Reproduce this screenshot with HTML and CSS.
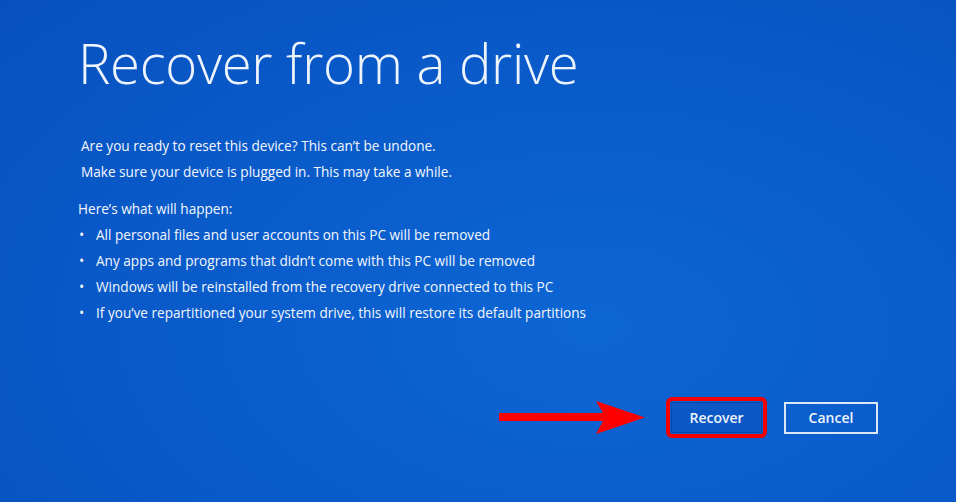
FILE: index.html
```html
<!DOCTYPE html>
<html lang="en">
<head>
    <meta charset="UTF-8">
    <meta name="viewport" content="width=device-width, initial-scale=1.0">
    <title>Recover from a drive</title>
    <link rel="stylesheet" href="styles.css">
</head>
<body>
    <div class="page">
        <h1>Recover from a drive</h1>

        <div class="intro">
            <p>Are you ready to reset this device? This can’t be undone.</p>
            <p>Make sure your device is plugged in. This may take a while.</p>
        </div>

        <div class="happen">
            <p>Here’s what will happen:</p>
            <ul>
                <li>All personal files and user accounts on this PC will be removed</li>
                <li>Any apps and programs that didn’t come with this PC will be removed</li>
                <li>Windows will be reinstalled from the recovery drive connected to this PC</li>
                <li>If you’ve repartitioned your system drive, this will restore its default partitions</li>
            </ul>
        </div>

        <div class="actions">
            <!-- стрелка-подсказка -->
            <svg class="arrow" width="146" height="33" viewBox="0 0 146 33">
                <polygon points="0,12 104,12 97,0 146,16.5 97,33 104,20 0,20" fill="#ff0000"/>
            </svg>
            <div class="highlight">
                <button class="btn btn-primary">Recover</button>
            </div>
            <button class="btn btn-cancel">Cancel</button>
        </div>
    </div>
</body>
</html>
```

FILE: styles.css
```css
/* Основные стили */
html, body {
    margin: 0;
    padding: 0;
    height: 100%;
}
body {
    background: radial-gradient(ellipse 85% 95% at 62% 65%, #0c66d4 0%, #0a5bca 50%, #0850bf 100%);
    color: #f3f7fd;
    font-family: "Open Sans", "Segoe UI", sans-serif;
    overflow: hidden;
}
.page {
    padding: 30px 78px 0 78px;
}
h1 {
    margin: 0;
    font-size: 54.5px;
    font-weight: 300;
    line-height: 66px;
    color: #eef4fc;
    letter-spacing: -0.3px;
}
.intro {
    margin-top: 37px;
    padding-left: 3px;
}
p {
    margin: 0;
    font-size: 13.6px;
    line-height: 26px;
}
.happen {
    margin-top: 11px;
}
ul {
    list-style: none;
    margin: 0;
    padding: 0;
}
li {
    position: relative;
    padding-left: 18px;
    font-size: 13.6px;
    line-height: 26px;
}
li::before {
    content: "•";
    position: absolute;
    left: 1px;
    top: 0;
    font-size: 14px;
}
.actions {
    display: flex;
    justify-content: flex-end;
    align-items: center;
    margin-top: 71px;
}
.arrow {
    display: block;
    margin-right: 21px;
}
.highlight {
    border: 4px solid #f70000;
    border-radius: 6px;
    padding: 1px;
    margin-right: 17px;
}
.btn {
    font-family: "Open Sans", "Segoe UI", sans-serif;
    font-size: 14px;
    font-weight: 600;
    color: #eef4fc;
    cursor: pointer;
    padding: 0;
}
.btn-primary {
    display: block;
    width: 91px;
    height: 31px;
    background: #0b58c6;
    border: 1px solid #0946a6;
}
.btn-cancel {
    width: 94px;
    height: 32px;
    background: transparent;
    border: 2px solid #dbe7f7;
}
```
